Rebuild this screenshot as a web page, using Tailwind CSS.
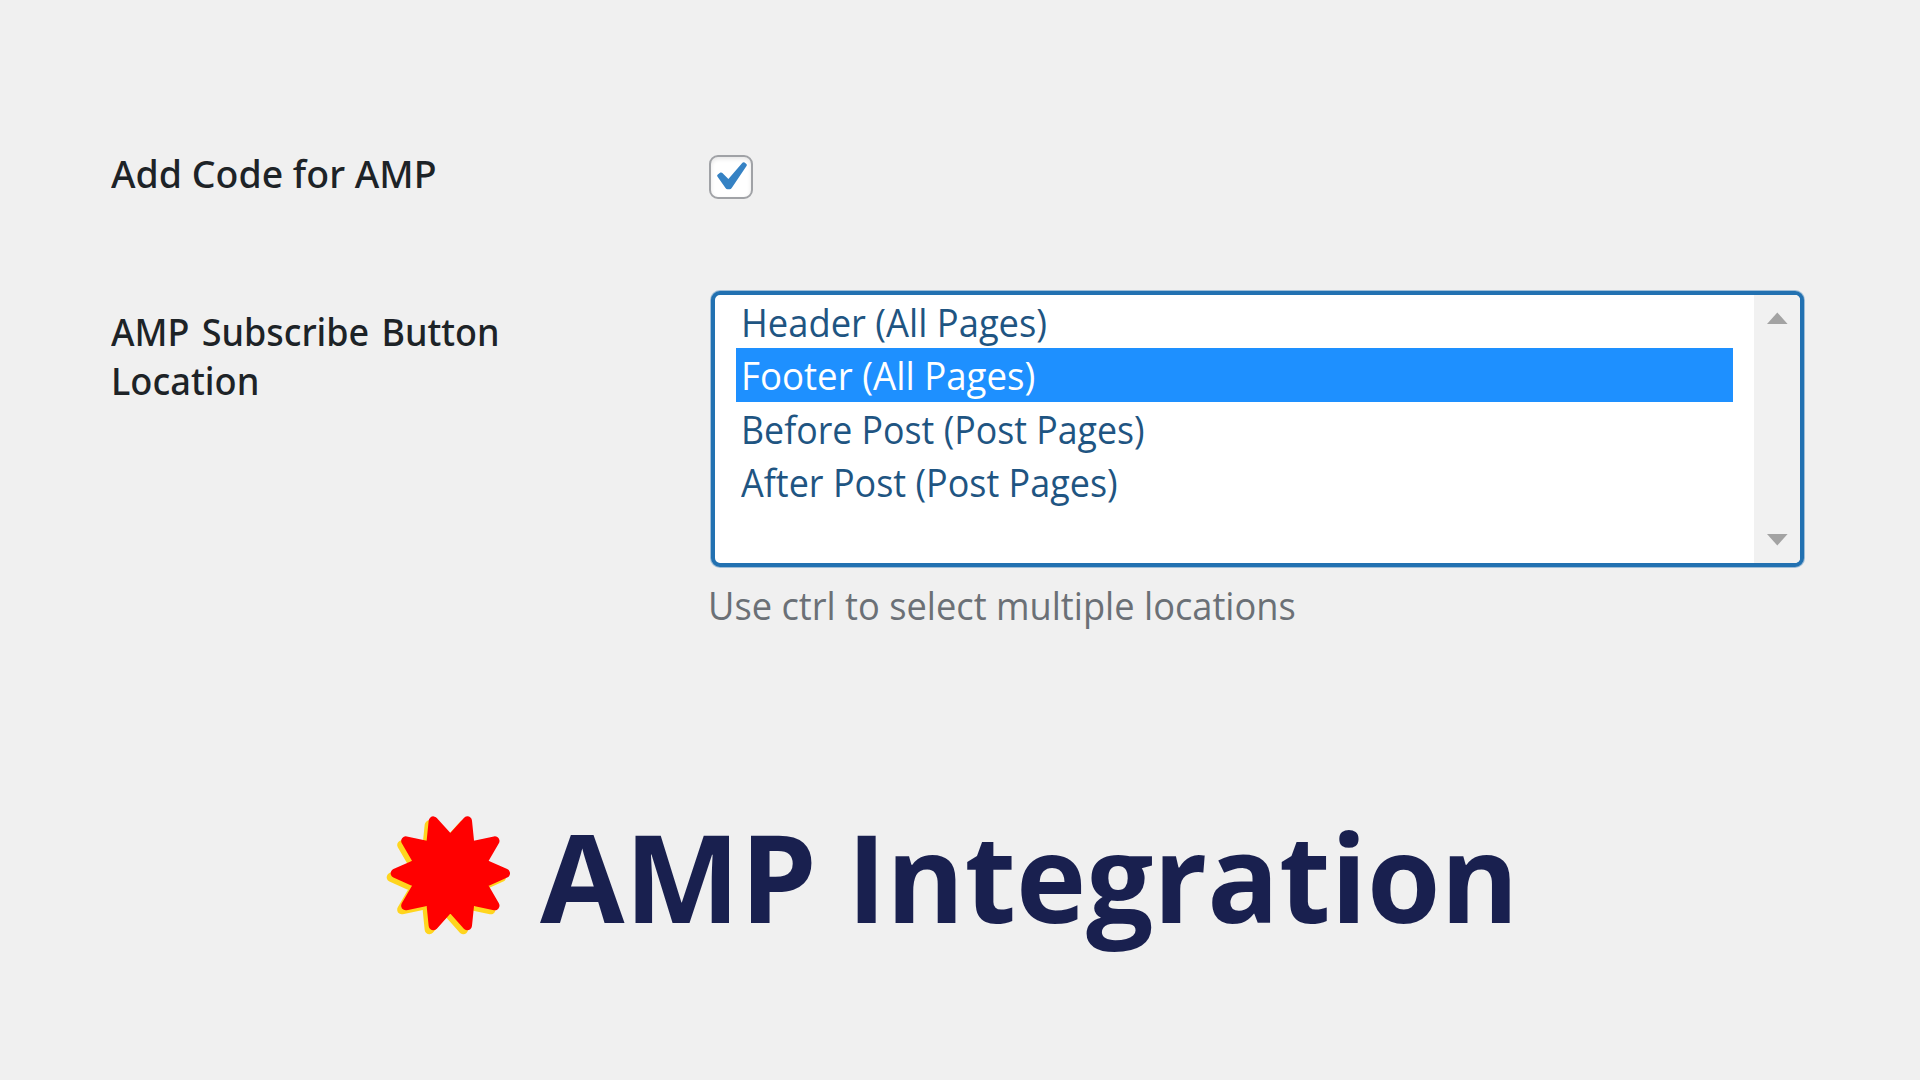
<!DOCTYPE html>
<html lang="en">
<head>
<meta charset="utf-8">
<title>AMP Integration</title>
<script src="https://cdn.jsdelivr.net/npm/@tailwindcss/browser@4"></script>
</head>
<body class="h-[1080px] w-[1920px] overflow-hidden bg-[#f0f0f0] font-['Open_Sans',sans-serif] text-[38.5px]">
<main class="flex h-full flex-col pt-[148px]">
  <section class="flex h-[143px] pl-[111px]">
    <label class="w-[598px] font-['Noto_Sans',sans-serif] font-medium leading-[50px] text-[#1d2327]"><span class="inline-block origin-left scale-x-[0.973] whitespace-nowrap">Add Code for AMP</span></label>
    <div class="mt-[7px] size-11 rounded-[9px] border-2 border-[#a0a2a6] bg-white shadow-[inset_0_2px_4px_rgba(0,0,0,0.1)]">
      <svg class="size-10" viewBox="0 0 40 40" fill="#3582c4"><path d="M6.4 19.6Q5.6 18.4 6.8 17.4L9.4 15.6Q10.5 15 11.4 16L17.4 22L31.2 5.9Q32.3 4.7 33.6 5.6L35.4 6.9Q36.4 7.7 35.5 9L20.7 31Q19.9 32.2 18.6 32.2H16.6Q15.3 32.2 14.5 31Z"/></svg>
    </div>
  </section>

  <section class="flex h-[501px] pl-[111px]">
    <div class="flex w-[600px] flex-col items-start pt-[15.5px] font-['Noto_Sans',sans-serif] font-medium leading-[49px] text-[#1d2327]">
      <span class="origin-left scale-x-[0.934] whitespace-nowrap [word-spacing:3px]">AMP Subscribe Button</span>
      <span class="origin-left scale-x-[0.94]">Location</span>
    </div>
    <div class="w-[1093px]">
      <div class="flex h-[276px] overflow-hidden rounded-[9px] border-4 border-[#2271b1] bg-white shadow-[0_0_0_1px_rgba(34,113,177,0.4)]">
        <ul class="flex-1 whitespace-nowrap px-[21px] pt-px text-[#1f5582]">
          <li class="h-[52px] pl-[5px] leading-[52px]"><span class="inline-block origin-left scale-x-[0.944]">Header (All Pages)</span></li>
          <li class="h-[54px] bg-[#1e90ff] pl-[5px] leading-[54px] text-white"><span class="inline-block origin-left scale-x-[0.952]">Footer (All Pages)</span></li>
          <li class="h-[54px] pl-[5px] leading-[54px]"><span class="inline-block origin-left scale-x-[0.928]">Before Post (Post Pages)</span></li>
          <li class="h-[53px] pl-[5px] leading-[53px]"><span class="inline-block origin-left scale-x-[0.934]">After Post (Post Pages)</span></li>
        </ul>
        <div class="flex w-[46px] flex-col justify-between bg-[#f1f1f1] pb-[17px] pl-[13px] pt-[17px]">
          <svg class="h-3 w-[21px]" viewBox="0 0 21 12" fill="#a3a3a3"><path d="M10.3 0.5L20.6 12H0Z"/></svg>
          <svg class="h-3 w-[21px]" viewBox="0 0 21 12" fill="#a3a3a3"><path d="M10.3 11.5L20.6 0H0Z"/></svg>
        </div>
      </div>
      <p class="-ml-[3px] mt-[13px] origin-left scale-x-[0.941] whitespace-nowrap leading-[50px] text-[#6b7076]">Use ctrl to select multiple locations</p>
    </div>
  </section>

  <section class="flex pl-[380px]">
    <svg class="mt-[17px] h-[130px] w-[160px] shrink-0" viewBox="-211 -193 480 390">
      <defs>
        <path id="burst" stroke-width="28" stroke-linejoin="round" d="M165 0L111.9 23.5Q93 30.3 104.3 46.7L133.5 97L76.7 84.7Q57.6 79.3 56.9 99.1L51 156.9L12.2 113.6Q0 98 -12.2 113.6L-51 156.9L-56.9 99.1Q-57.6 79.3 -76.7 84.7L-133.5 97L-104.3 46.7Q-93 30.3 -111.9 23.5L-165 0L-111.9 -23.5Q-93 -30.3 -104.3 -46.7L-133.5 -97L-76.7 -84.7Q-57.6 -79.3 -56.9 -99.1L-51 -156.9L-12.2 -113.6Q0 -98 12.2 -113.6L51 -156.9L56.9 -99.1Q57.6 -79.3 76.7 -84.7L133.5 -97L104.3 -46.7Q93 -30.3 111.9 -23.5Z"/>
      </defs>
      <use href="#burst" x="-12" y="12" fill="#ffd51e" stroke="#ffd51e"/>
      <use href="#burst" fill="#ff0000" stroke="#ff0000"/>
    </svg>
    <h1 class="flex whitespace-nowrap text-[122.5px] font-bold leading-[168px] text-[#19204f]"><span class="w-[307px]">AMP</span><span class="origin-left scale-x-[0.97]">Integration</span></h1>
  </section>
</main>
</body>
</html>
